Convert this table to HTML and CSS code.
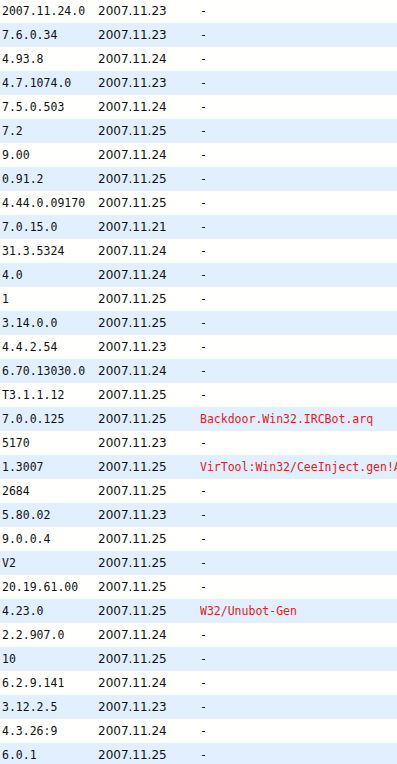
FILE: index.html
```html
<!DOCTYPE html>
<html>
<head>
<meta charset="utf-8">
<link rel="stylesheet" href="styles.css">
</head>
<body>
<table class="results">
<tbody>
<tr><td class="ver">2007.11.24.0</td><td class="date">2007.11.23</td><td class="res">-</td></tr>
<tr><td class="ver">7.6.0.34</td><td class="date">2007.11.23</td><td class="res">-</td></tr>
<tr><td class="ver">4.93.8</td><td class="date">2007.11.24</td><td class="res">-</td></tr>
<tr><td class="ver">4.7.1074.0</td><td class="date">2007.11.23</td><td class="res">-</td></tr>
<tr><td class="ver">7.5.0.503</td><td class="date">2007.11.24</td><td class="res">-</td></tr>
<tr><td class="ver">7.2</td><td class="date">2007.11.25</td><td class="res">-</td></tr>
<tr><td class="ver">9.00</td><td class="date">2007.11.24</td><td class="res">-</td></tr>
<tr><td class="ver">0.91.2</td><td class="date">2007.11.25</td><td class="res">-</td></tr>
<tr><td class="ver">4.44.0.09170</td><td class="date">2007.11.25</td><td class="res">-</td></tr>
<tr><td class="ver">7.0.15.0</td><td class="date">2007.11.21</td><td class="res">-</td></tr>
<tr><td class="ver">31.3.5324</td><td class="date">2007.11.24</td><td class="res">-</td></tr>
<tr><td class="ver">4.0</td><td class="date">2007.11.24</td><td class="res">-</td></tr>
<tr><td class="ver">1</td><td class="date">2007.11.25</td><td class="res">-</td></tr>
<tr><td class="ver">3.14.0.0</td><td class="date">2007.11.25</td><td class="res">-</td></tr>
<tr><td class="ver">4.4.2.54</td><td class="date">2007.11.23</td><td class="res">-</td></tr>
<tr><td class="ver">6.70.13030.0</td><td class="date">2007.11.24</td><td class="res">-</td></tr>
<tr><td class="ver">T3.1.1.12</td><td class="date">2007.11.25</td><td class="res">-</td></tr>
<tr><td class="ver">7.0.0.125</td><td class="date">2007.11.25</td><td class="res found">Backdoor.Win32.IRCBot.arq</td></tr>
<tr><td class="ver">5170</td><td class="date">2007.11.23</td><td class="res">-</td></tr>
<tr><td class="ver">1.3007</td><td class="date">2007.11.25</td><td class="res found">VirTool:Win32/CeeInject.gen!A</td></tr>
<tr><td class="ver">2684</td><td class="date">2007.11.25</td><td class="res">-</td></tr>
<tr><td class="ver">5.80.02</td><td class="date">2007.11.23</td><td class="res">-</td></tr>
<tr><td class="ver">9.0.0.4</td><td class="date">2007.11.25</td><td class="res">-</td></tr>
<tr><td class="ver">V2</td><td class="date">2007.11.25</td><td class="res">-</td></tr>
<tr><td class="ver">20.19.61.00</td><td class="date">2007.11.25</td><td class="res">-</td></tr>
<tr><td class="ver">4.23.0</td><td class="date">2007.11.25</td><td class="res found">W32/Unubot-Gen</td></tr>
<tr><td class="ver">2.2.907.0</td><td class="date">2007.11.24</td><td class="res">-</td></tr>
<tr><td class="ver">10</td><td class="date">2007.11.25</td><td class="res">-</td></tr>
<tr><td class="ver">6.2.9.141</td><td class="date">2007.11.24</td><td class="res">-</td></tr>
<tr><td class="ver">3.12.2.5</td><td class="date">2007.11.23</td><td class="res">-</td></tr>
<tr><td class="ver">4.3.26:9</td><td class="date">2007.11.24</td><td class="res">-</td></tr>
<tr><td class="ver">6.0.1</td><td class="date">2007.11.25</td><td class="res">-</td></tr>
</tbody>
</table>
</body>
</html>
```
FILE: styles.css
```css
html, body {
  margin: 0;
  padding: 0;
  overflow: hidden;
  background: #fffffd;
}
.results {
  border-collapse: collapse;
  margin-top: -1px;
  table-layout: fixed;
  width: 100%;
}
.results tr {
  height: 24px;
  background: #fffffd;
}
.results tr:nth-child(even) {
  background: #e1effe;
}
.results td {
  padding: 0;
  height: 24px;
  vertical-align: middle;
  white-space: nowrap;
  color: #111;
}
.ver {
  width: 96px;
  padding-left: 2px !important;
  font-family: "DejaVu Sans Mono", monospace;
  font-size: 11.5px;
}
.date {
  width: 102px;
  font-family: "DejaVu Sans", sans-serif;
  font-size: 12px;
}
.res {
  overflow: hidden;
  font-family: "DejaVu Sans Mono", monospace;
  font-size: 11.5px;
}
.found {
  color: #dd2222 !important;
}
```
